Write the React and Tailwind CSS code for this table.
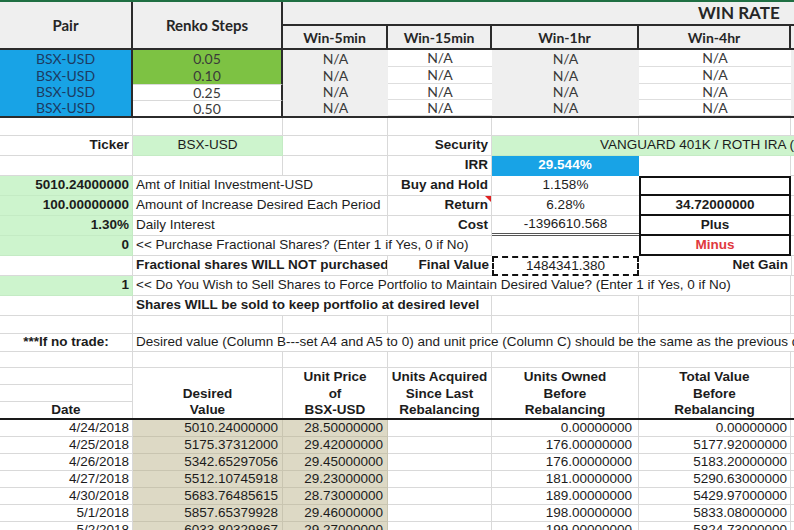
import React from 'react';
import { twMerge } from 'tailwind-merge';

const cols = 'grid grid-cols-[133px_150px_105px_104px_147px_152px_1fr]';

function Cell({ className, children }) {
  return (
    <div className={twMerge('flex items-center overflow-hidden whitespace-nowrap border-r border-b border-[#d9d9d9] px-[3px]', className)}>
      {children}
    </div>
  );
}

function Row({ className, children }) {
  return <div className={twMerge(cols, 'h-[20px]', className)}>{children}</div>;
}

const renko = ['0.05', '0.10', '0.25', '0.50'];

const history = [
  ['4/24/2018', '5010.24000000', '28.50000000', '0.00000000', '0.00000000'],
  ['4/25/2018', '5175.37312000', '29.42000000', '176.00000000', '5177.92000000'],
  ['4/26/2018', '5342.65297056', '29.45000000', '176.00000000', '5183.20000000'],
  ['4/27/2018', '5512.10745918', '29.23000000', '181.00000000', '5290.63000000'],
  ['4/30/2018', '5683.76485615', '28.73000000', '189.00000000', '5429.97000000'],
  ['5/1/2018', '5857.65379928', '29.46000000', '198.00000000', '5833.08000000'],
  ['5/2/2018', '6033.80329867', '29.27000000', '199.00000000', '5824.73000000'],
];

const headers = [
  ['', 'Desired', 'Value'],
  ['Unit Price', 'of', 'BSX-USD'],
  ['Units Acquired', 'Since Last', 'Rebalancing'],
  ['Units Owned', 'Before', 'Rebalancing'],
  ['Total Value', 'Before', 'Rebalancing'],
];

export default function App() {
  return (
    <div className="h-[530px] w-[794px] overflow-hidden bg-white">
      <div className="h-[2px] bg-[#1f6f43]" />

      {/* win rate header */}
      <div className={`${cols} grid-rows-[24px_24px] bg-[#efefef] font-['Lato',sans-serif] text-[#262626]`}>
        <div className="row-span-2 flex items-center justify-center border-r-2 border-b-2 border-[#2b2b2b] text-[15px] font-bold">Pair</div>
        <div className="row-span-2 flex items-center justify-center border-r-2 border-b-2 border-[#2b2b2b] text-[15px] font-bold">Renko Steps</div>
        <div className="col-span-5 flex items-center border-b-2 border-[#2b2b2b] pl-[415px] text-[17px] font-bold">WIN RATE</div>
        {['Win-5min', 'Win-15min', 'Win-1hr', 'Win-4hr'].map((w) => (
          <div key={w} className="flex items-center justify-center border-r-2 border-b-2 border-[#2b2b2b] text-[14px] font-bold">{w}</div>
        ))}
        <div className="border-b-2 border-[#2b2b2b]" />
      </div>

      <div className={`${cols} grid-rows-[17px_17px_16px_16px] font-['Lato',sans-serif] text-[14px] leading-none text-[#3a3a3a]`}>
        <div className="row-span-4 grid grid-rows-[17px_17px_16px_16px] border-r-2 border-[#2b2b2b] bg-[#18a3e6] text-[#1d3b63]">
          {renko.map((r) => (
            <div key={r} className="flex items-center justify-center">BSX-USD</div>
          ))}
        </div>
        {renko.map((r, i) => (
          <React.Fragment key={r}>
            <div className={i < 2 ? 'flex items-center justify-center border-r-2 border-[#2b2b2b] bg-[#7dc243]' : 'flex items-center justify-center border-r-2 border-t border-r-[#2b2b2b] border-t-[#d9d9d9] bg-white'}>{r}</div>
            <div className="flex items-center justify-center bg-[#efefef]">N/A</div>
            <div className="flex items-center justify-center border-b border-[#dedede] bg-white">N/A</div>
            <div className="flex items-center justify-center bg-[#efefef]">N/A</div>
            <div className="flex items-center justify-center border-b border-[#dedede] bg-white">N/A</div>
            <div className="bg-[#efefef]" />
          </React.Fragment>
        ))}
      </div>
      <div className="h-[2px] bg-[#2b2b2b]" />

      {/* portfolio inputs */}
      <div className="font-['Liberation_Sans',Arial,sans-serif] text-[13.5px] text-[#1c1c1c]">
        <Row className="h-[18px]">
          <Cell /><Cell /><Cell /><Cell /><Cell /><Cell /><Cell className="border-r-0" />
        </Row>
        <Row>
          <Cell className="justify-end font-bold">Ticker</Cell>
          <Cell className="justify-center border-[#c4ebc4] bg-[#cdf4cd]">BSX-USD</Cell>
          <Cell />
          <Cell className="justify-end font-bold">Security</Cell>
          <Cell className="col-span-3 border-r-0 border-[#c4ebc4] bg-[#cdf4cd] pl-[108px]">VANGUARD 401K / ROTH IRA (EXAMPLE)</Cell>
        </Row>
        <Row>
          <Cell /><Cell /><Cell />
          <Cell className="justify-end font-bold">IRR</Cell>
          <Cell className="justify-center border-[#18a3e6] bg-[#18a3e6] font-bold text-white">29.544%</Cell>
          <Cell className="border-b-0" /><Cell className="border-r-0" />
        </Row>
        <Row>
          <Cell className="justify-end border-[#c4ebc4] bg-[#cdf4cd] font-bold">5010.24000000</Cell>
          <Cell className="col-span-2">Amt of Initial Investment-USD</Cell>
          <Cell className="justify-end font-bold">Buy and Hold</Cell>
          <Cell className="justify-center border-r-0">1.158%</Cell>
          <Cell className="border-2 border-[#111]" />
          <Cell className="border-r-0" />
        </Row>
        <Row>
          <Cell className="justify-end border-[#c4ebc4] bg-[#cdf4cd] font-bold">100.00000000</Cell>
          <Cell className="col-span-2">Amount of Increase Desired Each Period</Cell>
          <Cell className="relative justify-end font-bold">
            Return
            <span className="absolute right-0 top-0 h-0 w-0 border-l-[6px] border-t-[6px] border-l-transparent border-t-[#e02020]" />
          </Cell>
          <Cell className="justify-center border-r-0">6.28%</Cell>
          <Cell className="justify-center border-x-2 border-b-2 border-[#111] font-bold">34.72000000</Cell>
          <Cell className="border-r-0" />
        </Row>
        <Row>
          <Cell className="justify-end border-[#c4ebc4] bg-[#cdf4cd] font-bold">1.30%</Cell>
          <Cell className="col-span-2">Daily Interest</Cell>
          <Cell className="justify-end font-bold">Cost</Cell>
          <Cell className="justify-center border-r-0 border-b-[3px] border-double border-b-[#555]">-1396610.568</Cell>
          <Cell className="justify-center border-x-2 border-b-2 border-[#111] font-bold">Plus</Cell>
          <Cell className="border-r-0" />
        </Row>
        <Row>
          <Cell className="justify-end border-[#c4ebc4] bg-[#cdf4cd] font-bold">0</Cell>
          <Cell className="col-span-3">{'<< Purchase Fractional Shares? (Enter 1 if Yes, 0 if No)'}</Cell>
          <Cell className="border-r-0 border-b-0" />
          <Cell className="justify-center border-x-2 border-b-2 border-[#111] font-bold text-[#e0393e]">Minus</Cell>
          <Cell className="border-r-0" />
        </Row>
        <Row>
          <Cell />
          <Cell className="col-span-2 font-bold">Fractional shares WILL NOT purchased</Cell>
          <Cell className="justify-end border-r-0 font-bold">Final Value</Cell>
          <Cell className="justify-center border-2 border-dashed border-[#111]">1484341.380</Cell>
          <Cell className="justify-end border-r-0 font-bold">Net Gain</Cell>
          <Cell className="border-l border-[#d9d9d9] border-r-0" />
        </Row>
        <Row>
          <Cell className="justify-end border-[#c4ebc4] bg-[#cdf4cd] font-bold">1</Cell>
          <Cell className="col-span-5">{'<< Do You Wish to Sell Shares to Force Portfolio to Maintain Desired Value? (Enter 1 if Yes, 0 if No)'}</Cell>
          <Cell className="border-r-0" />
        </Row>
        <Row>
          <Cell />
          <Cell className="col-span-3 font-bold">Shares WILL be sold to keep portfolio at desired level</Cell>
          <Cell /><Cell /><Cell className="border-r-0" />
        </Row>
        <Row className="h-[18px]">
          <Cell /><Cell /><Cell /><Cell /><Cell /><Cell /><Cell className="border-r-0" />
        </Row>
        <Row className="h-[18px]">
          <Cell className="justify-center font-bold">***If no trade:</Cell>
          <Cell className="col-span-6 border-r-0">Desired value (Column B---set A4 and A5 to 0) and unit price (Column C) should be the same as the previous day</Cell>
        </Row>
        <Row className="h-[16px]">
          <Cell /><Cell /><Cell /><Cell /><Cell /><Cell /><Cell className="border-r-0" />
        </Row>

        {/* history table */}
        <div className={`${cols} grid-rows-[17px_17px_16px]`}>
          <Cell />
          {headers.map((h, i) => (
            <div key={i} className="row-span-3 flex flex-col items-center border-r border-[#d9d9d9] font-bold leading-none">
              {h.map((line, j) => (
                <div key={j} className={j === 2 ? 'flex h-[16px] items-center' : 'flex h-[17px] items-center'}>{line}</div>
              ))}
            </div>
          ))}
          <div className="row-span-3" />
          <Cell />
          <Cell className="justify-center border-b-0 font-bold">Date</Cell>
        </div>
        <div className="h-[2px] bg-[#1a1a1a]" />
        {history.map((r) => (
          <Row key={r[0]} className="h-[17px]">
            <Cell className="justify-end">{r[0]}</Cell>
            <Cell className="justify-end border-[#c9c5b1] bg-[#ddd9c5] pr-[4px]">{r[1]}</Cell>
            <Cell className="justify-end border-[#c9c5b1] bg-[#ddd9c5] pr-[4px]">{r[2]}</Cell>
            <Cell />
            <Cell className="justify-end pr-[6px]">{r[3]}</Cell>
            <Cell className="justify-end pr-[3px]">{r[4]}</Cell>
            <Cell className="border-r-0" />
          </Row>
        ))}
      </div>
    </div>
  );
}
